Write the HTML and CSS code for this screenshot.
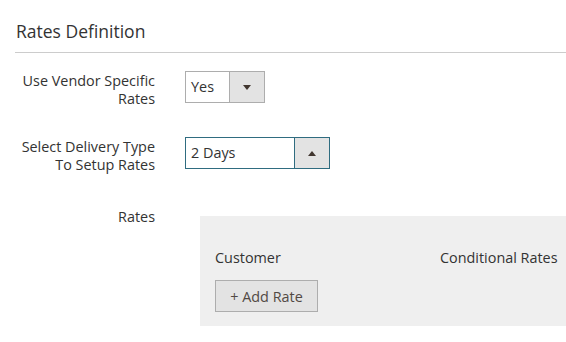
FILE: index.html
```html
<!DOCTYPE html>
<html>
<head>
<meta charset="utf-8">
<link rel="stylesheet" href="styles.css">
</head>
<body>
<div class="page">
  <h2 class="section-title">Rates Definition</h2>
  <div class="divider"></div>
  <div class="field">
    <label class="field-label">Use Vendor Specific Rates</label>
    <div class="select select-small">
      <span class="select-value">Yes</span>
      <span class="select-btn"><span class="arrow-down"></span></span>
    </div>
  </div>
  <div class="field field-second">
    <label class="field-label">Select Delivery Type To Setup Rates</label>
    <div class="select select-wide focused">
      <span class="select-value">2 Days</span>
      <span class="select-btn"><span class="arrow-up"></span></span>
    </div>
  </div>
  <div class="field field-rates">
    <label class="field-label">Rates</label>
    <div class="rates-box">
      <div class="rates-head">
        <span class="col-customer">Customer</span>
        <span class="col-cond">Conditional Rates</span>
      </div>
      <button class="add-btn">+ Add Rate</button>
    </div>
  </div>
</div>
</body>
</html>
```

FILE: styles.css
```css
html, body {
  margin: 0;
  padding: 0;
  background: #fff;
  overflow: hidden;
}
body {
  font-family: "Open Sans", "Noto Sans", sans-serif;
  color: #303030;
  width: 566px;
  height: 342px;
}
.page {
  padding-top: 19px;
}
.section-title {
  margin: 0 0 0 16px;
  font-size: 17.5px;
  font-weight: 400;
  line-height: 24px;
  color: #333333;
}
.divider {
  margin: 9px 0 0 15px;
  border-top: 1px solid #cccccc;
}
.field {
  display: grid;
  grid-template-columns: 155px 1fr;
  column-gap: 30px;
  align-items: start;
  margin-top: 18px;
}
.field-second {
  margin-top: 29px;
}
.field-rates {
  margin-top: 33px;
}
.field-label {
  text-align: right;
  font-size: 14.4px;
  line-height: 18px;
  padding-top: 1px;
  padding-left: 18px;
  color: #333333;
}
.select {
  display: flex;
  height: 32px;
  box-sizing: border-box;
  border: 1px solid #adadad;
  background: #fff;
}
.select-small {
  width: 80px;
}
.select-wide {
  width: 145px;
}
.select.focused {
  border-color: #2f6c80;
}
.select-value {
  flex: 1;
  padding-left: 5px;
  font-size: 14.4px;
  line-height: 30px;
  color: #333333;
}
.select-btn {
  width: 34px;
  background: #e3e3e3;
  border-left: 1px solid #adadad;
  display: flex;
  align-items: center;
  justify-content: center;
}
.focused .select-btn {
  border-left-color: #2f6c80;
}
.arrow-down {
  width: 0;
  height: 0;
  border-left: 4px solid transparent;
  border-right: 4px solid transparent;
  border-top: 5px solid #41362f;
}
.arrow-up {
  width: 0;
  height: 0;
  border-left: 4px solid transparent;
  border-right: 4px solid transparent;
  border-bottom: 5px solid #41362f;
}
.rates-box {
  margin: 9px 0 0 15px;
  background: #efefef;
  padding: 33px 0 14px 15px;
}
.rates-head {
  display: grid;
  grid-template-columns: 225px auto;
  font-size: 14.4px;
  line-height: 18px;
  color: #333333;
}
.add-btn {
  margin-top: 13px;
  height: 32px;
  width: 103px;
  box-sizing: border-box;
  border: 1px solid #adadad;
  background: #e3e3e3;
  font-family: "Open Sans", "Noto Sans", sans-serif;
  font-size: 14.4px;
  color: #514943;
  padding: 0;
  display: block;
}
```
